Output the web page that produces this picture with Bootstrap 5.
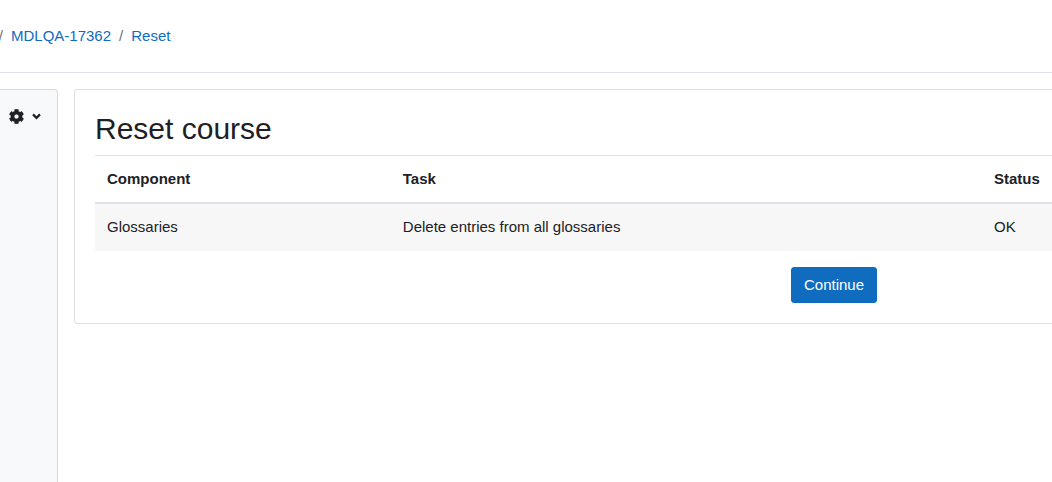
<!DOCTYPE html>
<html lang="en">
<head>
  <meta charset="UTF-8" />
  <meta name="viewport" content="width=device-width, initial-scale=1.0"/>
  <title>Reset course</title>
  <link href="https://cdn.jsdelivr.net/npm/bootstrap@5.3.0/dist/css/bootstrap.min.css" rel="stylesheet"/>
  <style>
    html, body {
      height: 100%;
      overflow: hidden;
    }

    body {
      font-family: "Liberation Sans", Arial, sans-serif;
      font-size: 15px;
      line-height: 22.5px;
      color: #1d2125;
      width: 1594px;
    }

    a {
      color: #0f6cbf;
      text-decoration: none;
    }

    .page-top {
      height: 73px;
      border-bottom: 1px solid #dee2e6;
      padding-top: 25px;
    }

    .page-top .breadcrumb {
      margin: 0 0 0 -9.2px;
    }

    .breadcrumb-item + .breadcrumb-item::before {
      color: #6a737b;
    }

    .page-body {
      height: 409px;
      padding-top: 16px;
    }

    .side-panel {
      width: 58px;
      background-color: #f8f9fa;
      border: 1px solid rgba(0, 0, 0, .125);
      border-left: 0;
      border-bottom: 0;
      border-top-right-radius: 4px;
      padding: 19px 0 0 8.5px;
      margin-right: 16px;
    }

    .side-panel svg {
      display: block;
    }

    .main-box {
      width: 1520px;
      height: 235px;
      border-color: rgba(0, 0, 0, .125);
      border-radius: 4px;
      padding: 20px;
    }

    .main-box h2 {
      font-size: 30px;
      line-height: 36px;
      font-weight: 400;
      margin: 1px 0 8px;
    }

    .main-box .table {
      --bs-table-color: #1d2125;
      --bs-table-border-color: #dee2e6;
      --bs-table-striped-bg: rgba(0, 0, 0, .03);
      --bs-table-striped-color: #1d2125;
      font-size: 15px;
      margin-bottom: 16.5px;
      table-layout: fixed;
      border-top: 1px solid #dee2e6;
    }

    .main-box th, .main-box td {
      padding: 12px;
      line-height: 22.5px;
      border-bottom: 0;
    }

    .main-box thead th {
      line-height: 22px;
      border-bottom: 2px solid #dee2e6;
    }

    .col-one { width: 295.8px; }
    .col-two { width: 591.2px; }

    .btn-continue {
      --bs-btn-bg: #0f6cbf;
      --bs-btn-border-color: #0f6cbf;
      --bs-btn-hover-bg: #0c589c;
      --bs-btn-hover-border-color: #0c589c;
      --bs-btn-font-size: 15px;
      --bs-btn-line-height: 22px;
      --bs-btn-padding-x: 12px;
      --bs-btn-padding-y: 6px;
      --bs-btn-border-radius: 3px;
    }
  </style>
</head>
<body>

  <!-- Cabecera -->
  <div class="page-top">
    <ol class="breadcrumb">
      <li class="breadcrumb-item"></li>
      <li class="breadcrumb-item"><a href="#">MDLQA-17362</a></li>
      <li class="breadcrumb-item"><a href="#">Reset</a></li>
    </ol>
  </div>

  <div class="page-body d-flex">
    <!-- Bloques -->
    <div class="side-panel flex-shrink-0">
      <div class="d-flex align-items-center">
        <svg width="15" height="15" viewBox="0 0 512 512"><path fill="#1d2125" stroke="#1d2125" stroke-width="14" d="M487.4 315.7l-42.6-24.6c4.3-23.2 4.3-47 0-70.2l42.6-24.6c4.9-2.8 7.1-8.6 5.5-14-11.1-35.6-30-67.8-54.7-94.6-3.8-4.1-10-5.1-14.8-2.3L380.8 110c-17.9-15.4-38.5-27.3-60.8-35.1V25.8c0-5.6-3.9-10.5-9.4-11.7-36.7-8.2-74.3-7.8-109.2 0-5.5 1.2-9.4 6.1-9.4 11.7V75c-22.2 7.9-42.8 19.8-60.8 35.1L88.7 85.5c-4.9-2.8-11-1.9-14.8 2.3-24.7 26.7-43.6 58.9-54.7 94.6-1.7 5.4.6 11.2 5.5 14L67.3 221c-4.3 23.2-4.3 47 0 70.2l-42.6 24.6c-4.9 2.8-7.1 8.6-5.5 14 11.1 35.6 30 67.8 54.7 94.6 3.8 4.1 10 5.1 14.8 2.3l42.6-24.6c17.9 15.4 38.5 27.3 60.8 35.1v49.2c0 5.6 3.9 10.5 9.4 11.7 36.7 8.2 74.3 7.8 109.2 0 5.5-1.2 9.4-6.1 9.4-11.7v-49.2c22.2-7.9 42.8-19.8 60.8-35.1l42.6 24.6c4.9 2.8 11 1.9 14.8-2.3 24.7-26.7 43.6-58.9 54.7-94.6 1.5-5.5-.7-11.3-5.6-14.1zM256 336c-44.1 0-80-35.9-80-80s35.9-80 80-80 80 35.9 80 80-35.9 80-80 80z"/></svg>
        <svg class="ms-2" width="9" height="7" viewBox="0 0 9 7"><polyline points="1,1.4 4.5,4.9 8,1.4" fill="none" stroke="#1d2125" stroke-width="2.2"/></svg>
      </div>
    </div>

    <!-- Contenido -->
    <div class="main-box card flex-shrink-0">
      <h2>Reset course</h2>
      <table class="table table-striped">
        <colgroup>
          <col class="col-one" />
          <col class="col-two" />
          <col />
        </colgroup>
        <thead>
          <tr>
            <th>Component</th>
            <th>Task</th>
            <th>Status</th>
          </tr>
        </thead>
        <tbody>
          <tr>
            <td>Glossaries</td>
            <td>Delete entries from all glossaries</td>
            <td>OK</td>
          </tr>
        </tbody>
      </table>
      <div class="text-center">
        <button class="btn btn-primary btn-continue" type="button">Continue</button>
      </div>
    </div>
  </div>

  <script src="https://cdn.jsdelivr.net/npm/bootstrap@5.3.0/dist/js/bootstrap.bundle.min.js"></script>
</body>
</html>
